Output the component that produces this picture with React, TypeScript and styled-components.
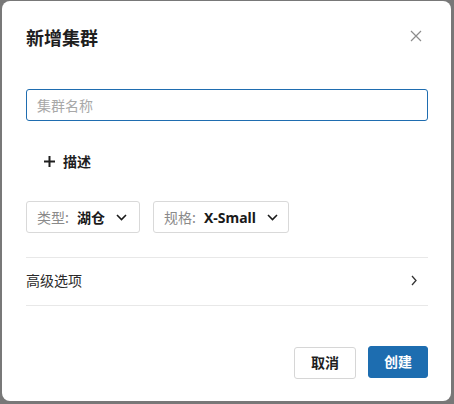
import React from "react";
import styled, { createGlobalStyle } from "styled-components";

const Global = createGlobalStyle`
  html, body { margin: 0; padding: 0; }
  body {
    background: #787878;
    font-family: "Noto Sans", "Noto Sans CJK SC", sans-serif;
    overflow: hidden;
  }
  #root { padding: 1px 3px 0 2px; }
`;

const Modal = styled.div`
  box-sizing: border-box;
  width: 449px;
  height: 400px;
  background: #fff;
  border-radius: 8px;
  padding: 25px 23px 22px 24px;
  display: flex;
  flex-direction: column;
`;

const Header = styled.div`
  display: flex;
  align-items: center;
  justify-content: space-between;
  height: 24px;
`;

const Title = styled.h2`
  margin: -3px 0 0 0;
  font-family: "Noto Sans CJK SC", sans-serif;
  font-size: 18px;
  font-weight: 700;
  color: #1f1f1f;
  line-height: 24px;
`;

const CloseBtn = styled.button`
  border: 0;
  background: none;
  padding: 0;
  margin-right: 6px;
  margin-top: -4px;
  width: 12px;
  height: 12px;
  display: flex;
  cursor: pointer;
`;

const Input = styled.input`
  box-sizing: border-box;
  margin-top: 39px;
  width: 100%;
  height: 32px;
  border: 1px solid #1f6db0;
  border-radius: 3px;
  padding: 0 10px;
  font-family: "Noto Sans CJK SC", sans-serif;
  font-size: 14px;
  color: #222;
  outline: none;
  &::placeholder { color: #a8a8a8; }
`;

const TextButton = styled.button`
  margin-top: 24px;
  align-self: flex-start;
  height: 32px;
  border: 0;
  background: none;
  padding: 0 0 0 18px;
  display: flex;
  align-items: center;
  gap: 8px;
  font-family: "Noto Sans CJK SC", sans-serif;
  font-size: 14px;
  font-weight: 700;
  color: #1f1f1f;
  cursor: pointer;
`;

const SelectRow = styled.div`
  margin-top: 24px;
  display: flex;
  gap: 13px;
`;

const Select = styled.button<{ $w: number }>`
  box-sizing: border-box;
  width: ${(p) => p.$w}px;
  height: 32px;
  border: 1px solid #d9d9d9;
  border-radius: 3px;
  background: #fff;
  padding: 0 0 0 10px;
  display: flex;
  align-items: center;
  font-size: 14px;
  cursor: pointer;
`;

const SelLabel = styled.span`
  font-family: "Noto Sans CJK SC", sans-serif;
  color: #8a8a8a;
  margin-right: 8px;
`;

const SelValue = styled.span`
  font-family: "Noto Sans", "Noto Sans CJK SC", sans-serif;
  font-weight: 700;
  color: #1a1a1a;
  margin-right: 11px;
`;

const Divider = styled.div<{ $top: number }>`
  margin-top: ${(p) => p.$top}px;
  height: 1px;
  background: #e8e8e8;
`;

const AdvancedRow = styled.div`
  box-sizing: border-box;
  height: 47px;
  display: flex;
  align-items: center;
  justify-content: space-between;
  font-family: "Noto Sans CJK SC", sans-serif;
  font-size: 14px;
  color: #2a2a2a;
  padding: 0 11px 3px 0;
  cursor: pointer;
`;

const Footer = styled.div`
  margin-top: 40px;
  display: flex;
  justify-content: flex-end;
  gap: 12px;
`;

const Button = styled.button<{ $primary?: boolean }>`
  box-sizing: border-box;
  height: 32px;
  width: ${(p) => (p.$primary ? 60 : 62)}px;
  margin-top: ${(p) => (p.$primary ? 0 : 1)}px;
  border-radius: 3px;
  border: 1px solid ${(p) => (p.$primary ? "#1d6db0" : "#d6d6d6")};
  background: ${(p) => (p.$primary ? "#1d6db0" : "#fff")};
  color: ${(p) => (p.$primary ? "#fff" : "#1f1f1f")};
  font-family: "Noto Sans CJK SC", sans-serif;
  font-size: 14px;
  font-weight: 700;
  cursor: pointer;
  padding: 0 0 2px 0;
`;

const ChevronDown = () => (
  <svg width="11" height="7" viewBox="0 0 11 7" fill="none">
    <polyline points="1,1 5.5,5.5 10,1" stroke="#1a1a1a" strokeWidth="1.6" />
  </svg>
);

const ChevronRight = () => (
  <svg width="6" height="11" viewBox="0 0 6 11" fill="none">
    <polyline points="1,1 5,5.5 1,10" stroke="#333" strokeWidth="1.3" />
  </svg>
);

export default function App() {
  return (
    <>
      <Global />
      <Modal>
        <Header>
          <Title>新增集群</Title>
          <CloseBtn aria-label="close">
            <svg width="12" height="12" viewBox="0 0 12 12" fill="none">
              <path d="M1 1L11 11M11 1L1 11" stroke="#8c8c8c" strokeWidth="1.2" />
            </svg>
          </CloseBtn>
        </Header>
        <Input placeholder="集群名称" />
        <TextButton>
          <svg width="11" height="11" viewBox="0 0 11 11" fill="none">
            <path d="M5.5 0V11M0 5.5H11" stroke="#1f1f1f" strokeWidth="2" />
          </svg>
          描述
        </TextButton>
        <SelectRow>
          <Select $w={114}>
            <SelLabel>类型:</SelLabel>
            <SelValue>湖仓</SelValue>
            <ChevronDown />
          </Select>
          <Select $w={136}>
            <SelLabel>规格:</SelLabel>
            <SelValue>X-Small</SelValue>
            <ChevronDown />
          </Select>
        </SelectRow>
        <Divider $top={24} />
        <AdvancedRow>
          高级选项
          <ChevronRight />
        </AdvancedRow>
        <Divider $top={0} />
        <Footer>
          <Button>取消</Button>
          <Button $primary>创建</Button>
        </Footer>
      </Modal>
    </>
  );
}
